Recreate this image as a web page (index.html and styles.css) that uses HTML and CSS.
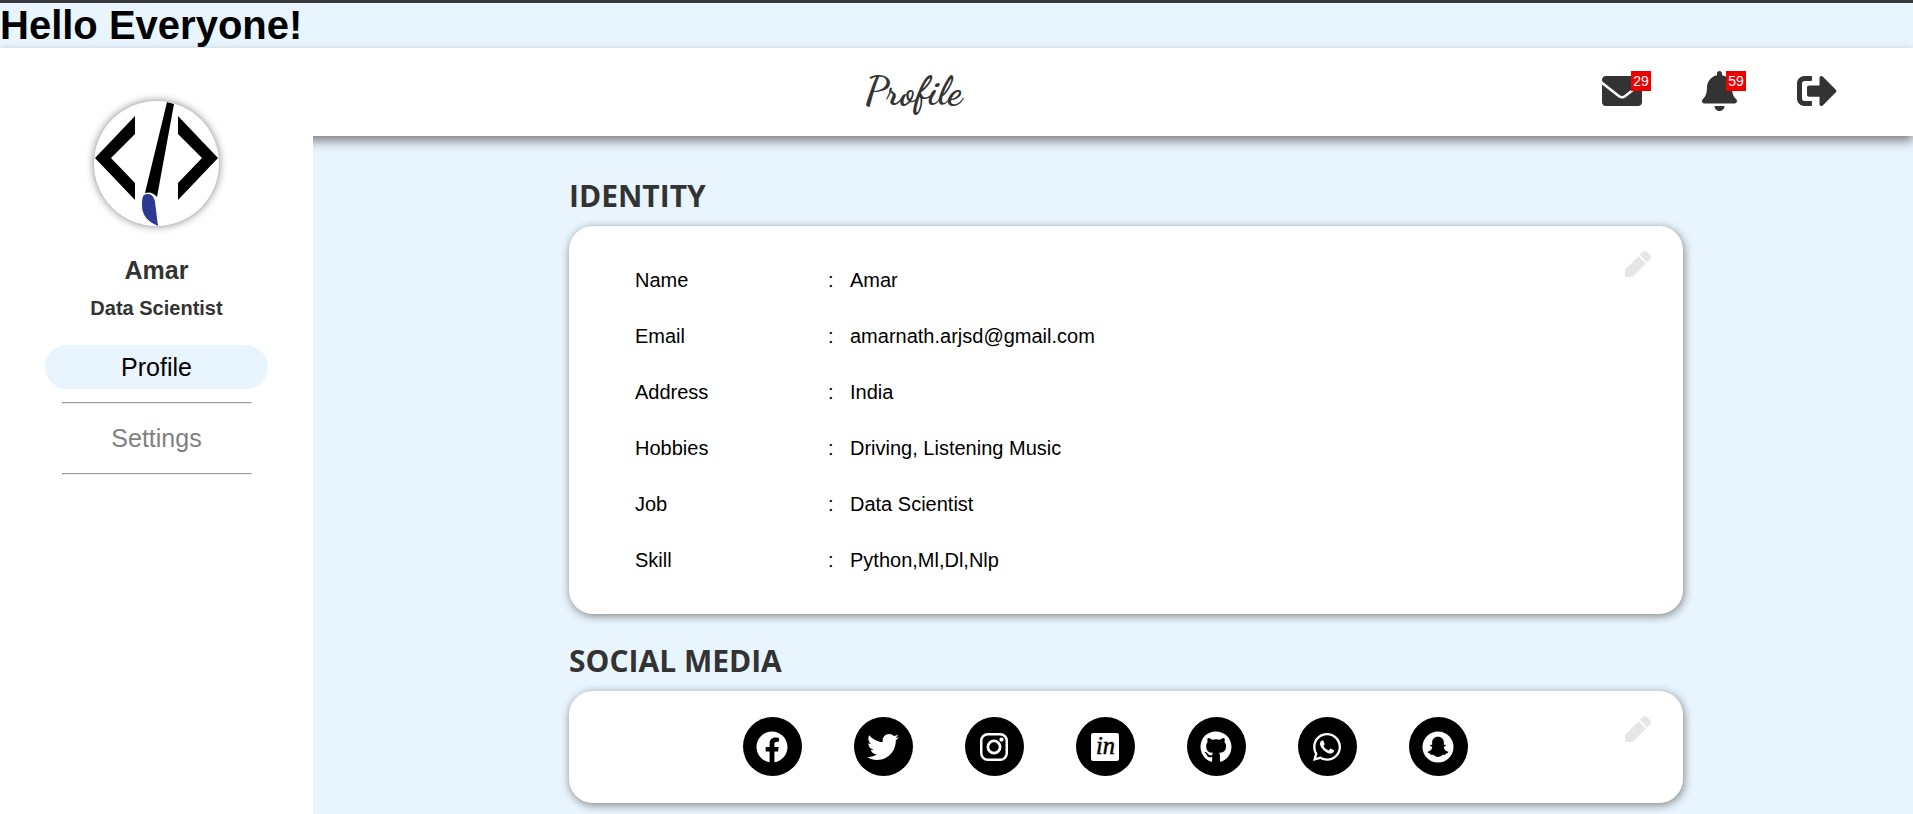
FILE: index.html
```html
<!DOCTYPE html>
<html lang="en">
<head>
<meta charset="utf-8">
<title>Profile</title>
<link rel="stylesheet" href="styles.css">
</head>
<body>
<h1 class="greeting">Hello Everyone!</h1>
<div class="layout">
  <header class="topbar">
    <h2 class="topbar-title">Profile</h2>
    <nav class="topbar-actions" aria-label="Account">
      <a class="action" href="#" aria-label="Messages">
        <svg width="40" height="40" viewBox="0 0 512 512"><path d="M256 352c-16.530 0-33.060-5.422-47.160-16.410L0 173.200V400C0 426.500 21.490 448 48 448h416c26.510 0 48-21.490 48-48V173.200l-208.800 162.500C289.100 346.600 272.500 352 256 352zM16.290 145.300l212.200 165.100c16.190 12.600 38.870 12.600 55.060 0l212.200-165.100C505.100 137.300 512 125 512 112C512 85.490 490.500 64 464 64h-416C21.490 64 0 85.490 0 112C0 125 6.010 137.300 16.290 145.300z"/></svg>
        <span class="badge">29</span>
      </a>
      <a class="action" href="#" aria-label="Notifications">
        <svg width="35" height="40" viewBox="0 0 448 512"><path d="M224 512c35.32 0 63.97-28.65 63.97-64H160.03c0 35.35 28.65 64 63.97 64zm215.39-149.71c-19.32-20.76-55.47-51.99-55.47-154.29 0-77.7-54.48-139.9-127.94-155.16V32c0-17.67-14.32-32-31.98-32s-31.98 14.33-31.98 32v20.84C118.56 68.1 64.08 130.3 64.08 208c0 102.3-36.15 133.53-55.47 154.29-6 6.45-8.66 14.16-8.61 21.71.11 16.4 12.98 32 32.1 32h383.8c19.12 0 32-15.6 32.1-32 .05-7.55-2.61-15.27-8.61-21.71z"/></svg>
        <span class="badge">59</span>
      </a>
      <a class="action" href="#" aria-label="Sign out">
        <svg width="40" height="40" viewBox="0 0 512 512"><path d="M497 273L329 441c-15 15-41 4.500-41-17v-96H152c-13.300 0-24-10.700-24-24v-96c0-13.300 10.700-24 24-24h136V88c0-21.400 25.900-32 41-17l168 168c9.300 9.400 9.300 24.600 0 34zM192 436v-40c0-6.600-5.400-12-12-12H96c-17.700 0-32-14.300-32-32V160c0-17.700 14.300-32 32-32h84c6.600 0 12-5.400 12-12V76c0-6.600-5.400-12-12-12H96c-53 0-96 43-96 96v192c0 53 43 96 96 96h84c6.600 0 12-5.400 12-12z"/></svg>
      </a>
    </nav>
  </header>

  <aside class="sidebar">
    <svg class="avatar" viewBox="0 0 125 125" role="img" aria-label="Code and brush logo">
      <path d="M41 15v18L17 57l24 25v17L1 57z"/>
      <path d="M84 15v18l24 24-24 25v17l40-42z"/>
      <path d="M73 1l7 2-17 93q-5-6-12-4z"/>
      <path d="M50 94c6-3 10 1 11 7l3 24c-10-4-16-11-16-20 0-5 0-9 2-11z" fill="#2b3990"/>
    </svg>
    <p class="person">Amar</p>
    <p class="role">Data Scientist</p>
    <nav class="menu" aria-label="Sections">
      <a class="menu-link active" href="#">Profile</a>
      <hr class="rule">
      <a class="menu-link" href="#">Settings</a>
      <hr class="rule">
    </nav>
  </aside>

  <main class="content">
    <section>
      <h2 class="section-title">IDENTITY</h2>
      <div class="card identity">
        <button class="edit" type="button" aria-label="Edit identity"><svg width="26" height="26" viewBox="0 0 512 512"><path d="M0 371l269-269 146 146-264 264H22q-22 0-22-22zM292 79l58-58q42-42 84 0l57 57q42 42 0 84l-53 63z"/></svg></button>
        <table class="details">
          <tbody>
            <tr><th scope="row">Name</th><td class="colon">:</td><td>Amar</td></tr>
            <tr><th scope="row">Email</th><td class="colon">:</td><td>amarnath.arjsd@gmail.com</td></tr>
            <tr><th scope="row">Address</th><td class="colon">:</td><td>India</td></tr>
            <tr><th scope="row">Hobbies</th><td class="colon">:</td><td>Driving, Listening Music</td></tr>
            <tr><th scope="row">Job</th><td class="colon">:</td><td>Data Scientist</td></tr>
            <tr><th scope="row">Skill</th><td class="colon">:</td><td>Python,Ml,Dl,Nlp</td></tr>
          </tbody>
        </table>
      </div>
    </section>
    <section>
      <h2 class="section-title">SOCIAL MEDIA</h2>
      <div class="card social">
        <button class="edit" type="button" aria-label="Edit social media"><svg width="26" height="26" viewBox="0 0 512 512"><path d="M0 371l269-269 146 146-264 264H22q-22 0-22-22zM292 79l58-58q42-42 84 0l57 57q42 42 0 84l-53 63z"/></svg></button>
        <a class="social-link" href="#" aria-label="Facebook"><svg viewBox="0 0 512 512"><path d="M504 256C504 119 393 8 256 8S8 119 8 256c0 123.780 90.690 226.380 209.250 245V327.690h-63V256h63v-54.640c0-62.150 37-96.480 93.670-96.480 27.140 0 55.520 4.840 55.520 4.840v61h-31.280c-30.800 0-40.410 19.120-40.410 38.730V256h68.780l-11 71.690h-57.780V501C413.310 482.380 504 379.780 504 256z"/></svg></a>
        <a class="social-link" href="#" aria-label="Twitter"><svg viewBox="0 0 512 512"><path d="M459.37 151.716c.325 4.548.325 9.097.325 13.645 0 138.72-105.583 298.558-298.558 298.558-59.452 0-114.68-17.219-161.137-47.106 8.447.974 16.568 1.299 25.34 1.299 49.055 0 94.213-16.568 130.274-44.832-46.132-.975-84.792-31.188-98.112-72.772 6.498.974 12.995 1.624 19.818 1.624 9.421 0 18.843-1.3 27.614-3.573-48.081-9.747-84.143-51.98-84.143-102.985v-1.299c13.969 7.797 30.214 12.67 47.431 13.319-28.264-18.843-46.781-51.005-46.781-87.391 0-19.492 5.197-37.36 14.294-52.954 51.655 63.675 129.3 105.258 216.365 109.807-1.624-7.797-2.599-15.918-2.599-24.04 0-57.828 46.782-104.934 104.934-104.934 30.213 0 57.502 12.67 76.67 33.137 23.715-4.548 46.456-13.32 66.599-25.34-7.798 24.366-24.366 44.833-46.132 57.827 21.117-2.273 41.584-8.122 60.426-16.243-14.292 20.791-32.161 39.308-52.628 54.253z"/></svg></a>
        <a class="social-link" href="#" aria-label="Instagram"><svg viewBox="0 0 512 512"><rect x="52" y="52" width="408" height="408" rx="104" fill="none" stroke="#fff" stroke-width="40"/><circle cx="256" cy="256" r="98" fill="none" stroke="#fff" stroke-width="44"/><circle cx="376" cy="136" r="34"/></svg></a>
        <a class="social-link" href="#" aria-label="LinkedIn"><svg viewBox="0 0 512 512"><rect x="32" y="32" width="448" height="448" rx="34"/><text class="linkedin-mark" x="262" y="368" text-anchor="middle">in</text></svg></a>
        <a class="social-link" href="#" aria-label="GitHub"><svg viewBox="-8 0 512 512"><path d="M244.8 8C106.100 8 0 113.300 0 252c0 110.900 69.800 205.800 169.500 239.200 12.800 2.300 17.300-5.600 17.300-12.100 0-6.200-.3-40.400-.3-61.400 0 0-70 15-84.700-29.800 0 0-11.400-29.100-27.800-36.600 0 0-22.900-15.700 1.600-15.400 0 0 24.900 2 38.600 25.800 21.900 38.600 58.600 27.500 72.900 20.900 2.300-16 8.800-27.100 16-33.700-55.900-6.200-112.300-14.300-112.300-110.500 0-27.500 7.600-41.300 23.600-58.900-2.600-6.500-11.100-33.300 2.600-67.900 20.900-6.500 69 27 69 27 20-5.600 41.500-8.500 62.800-8.500s42.800 2.900 62.800 8.500c0 0 48.100-33.600 69-27 13.700 34.700 5.200 61.400 2.600 67.900 16 17.700 25.800 31.500 25.800 58.900 0 96.500-58.900 104.200-114.800 110.500 9.200 7.900 17 22.900 17 46.400 0 33.700-.3 75.400-.3 83.600 0 6.500 4.600 14.400 17.300 12.100C428.200 457.800 496 362.900 496 252 496 113.300 383.500 8 244.800 8z"/></svg></a>
        <a class="social-link" href="#" aria-label="WhatsApp"><svg viewBox="-32 0 512 512"><path d="M380.9 97.1C339 55.1 283.2 32 223.9 32c-122.4 0-222 99.6-222 222 0 39.1 10.2 77.3 29.6 111L0 480l117.700-30.900c32.400 17.700 68.900 27 106.100 27h.1c122.300 0 224.100-99.600 224.100-222 0-59.300-25.200-115-67.100-157zm-157 341.600c-33.200 0-65.700-8.900-94-25.700l-6.700-4-69.800 18.300L72 359.200l-4.400-7c-18.500-29.400-28.200-63.300-28.200-98.200 0-101.700 82.800-184.500 184.600-184.500 49.300 0 95.600 19.200 130.400 54.100 34.800 34.900 56.200 81.200 56.100 130.500 0 101.800-84.900 184.600-186.600 184.600zm101.200-138.200c-5.500-2.800-32.800-16.200-37.900-18-5.100-1.900-8.800-2.800-12.500 2.800-3.700 5.600-14.300 18-17.600 21.800-3.200 3.700-6.500 4.200-12 1.400-32.600-16.300-54-29.100-75.500-66-5.700-9.800 5.700-9.100 16.300-30.300 1.800-3.700.9-6.900-.5-9.700-1.400-2.800-12.500-30.100-17.100-41.200-4.500-10.800-9.100-9.300-12.500-9.500-3.200-.2-6.900-.2-10.600-.2-3.700 0-9.700 1.400-14.800 6.900-5.100 5.600-19.400 19-19.400 46.300 0 27.300 19.900 53.700 22.600 57.400 2.800 3.700 39.100 59.700 94.800 83.800 35.200 15.200 49 16.500 66.600 13.900 10.700-1.600 32.800-13.400 37.400-26.400 4.600-13 4.600-24.100 3.200-26.400-1.300-2.500-5-3.900-10.500-6.600z"/></svg></a>
        <a class="social-link" href="#" aria-label="Snapchat"><svg viewBox="0 0 512 512"><circle cx="256" cy="256" r="248"/><path d="M256 92c-58 0-94 40-94 92v38c-8 4-24-6-32 3-7 14 20 22 32 30 5 28-26 66-72 76-4 20 24 26 44 31l8 20c22 0 36-6 54 8 18 12 35 24 60 24s42-12 60-24c18-14 32-8 54-8l8-20c20-5 48-11 44-31-46-10-77-48-72-76 12-8 39-16 32-30-8-9-24 1-32-3v-38c0-52-36-92-94-92z" fill="#000"/></svg></a>
      </div>
    </section>
  </main>
</div>
</body>
</html>
```

FILE: styles.css
```css
* {
  box-sizing: border-box;
}

body {
  margin: 0;
  min-height: 100vh;
  display: flex;
  flex-direction: column;
  border-top: 3px solid #38393d;
  background: #e8f5ff;
  color: #000;
  font-family: "Liberation Sans", Arial, sans-serif;
}

a {
  color: inherit;
  text-decoration: none;
}

.greeting {
  margin: 0;
  font-size: 40px;
  line-height: 45px;
}

.layout {
  flex: 1;
  display: grid;
  grid-template-columns: 313px 1fr;
  grid-template-rows: auto 1fr;
}

.topbar {
  grid-column: 1 / 3;
  grid-row: 1;
  display: flex;
  align-items: center;
  justify-content: space-between;
  height: 88px;
  padding: 0 76px 2px 45.2%;
  background: #fff;
  box-shadow: 0 5px 10px grey;
  color: #333;
}

.topbar-title {
  margin: 0;
  font-family: "Dancing Script", cursive;
  font-size: 40px;
  line-height: 48px;
}

.topbar-actions {
  display: flex;
  gap: 60px;
}

.action {
  position: relative;
  display: block;
}

.action svg {
  display: block;
  fill: #333;
}

.badge {
  position: absolute;
  top: 0;
  right: -9px;
  width: 20px;
  background: #ed0000;
  color: #fff;
  font-size: 14px;
  line-height: 20px;
  text-align: center;
}

.sidebar {
  grid-column: 1;
  grid-row: 1 / 3;
  z-index: 1;
  display: flex;
  flex-direction: column;
  align-items: center;
  padding-top: 53px;
  background: #fff;
  color: #333;
  text-align: center;
}

.avatar {
  width: 125px;
  height: 125px;
  border-radius: 50%;
  box-shadow: 0 0 8px grey;
}

.person {
  margin: 30px 0 0;
  font-size: 25px;
  font-weight: bold;
  line-height: 28px;
}

.role {
  margin: 12px 0 0;
  font-size: 20px;
  font-weight: bold;
  line-height: 24px;
}

.menu {
  width: 223px;
  margin-top: 25px;
}

.menu-link {
  display: block;
  border-radius: 22px;
  color: #818181;
  font-size: 25px;
  line-height: 44px;
}

.menu-link.active {
  background: #e8f5ff;
  color: #000;
}

.rule {
  width: 190px;
  margin: 13px auto 12px;
}

.content {
  grid-column: 2;
  grid-row: 2;
  margin-right: 230px;
  margin-left: 16%;
  padding-top: 40px;
}

.section-title {
  margin: 0;
  color: #333;
  font-family: "Open Sans", "Segoe UI", sans-serif;
  font-size: 30px;
  line-height: 40px;
}

.card {
  position: relative;
  margin: 10px 0 27px;
  border-radius: 24px;
  background: #fff;
  box-shadow: 1px 2px 10px grey;
}

.edit {
  position: absolute;
  top: 25px;
  right: 32px;
  padding: 0;
  border: 0;
  background: none;
  cursor: pointer;
}

.edit svg {
  display: block;
  fill: #e6e6e6;
}

.identity {
  padding: 26px 66px;
}

.details {
  border-collapse: collapse;
  font-size: 20px;
}

.details th,
.details td {
  height: 56px;
  padding: 0;
  font-weight: normal;
  text-align: left;
}

.details th {
  width: 193px;
}

.details .colon {
  width: 22px;
}

.social {
  display: flex;
  justify-content: center;
  gap: 52px;
  margin-bottom: 10px;
  padding: 26px 42px 27px 0;
}

.social-link {
  display: grid;
  place-items: center;
  width: 59px;
  height: 59px;
  border-radius: 50%;
  background: #000;
}

.social-link svg {
  width: 32px;
  height: 32px;
  fill: #fff;
}

.linkedin-mark {
  fill: #000;
  stroke: #000;
  stroke-width: 8px;
  font-family: "Liberation Serif", serif;
  font-size: 390px;
  font-style: italic;
}
```
